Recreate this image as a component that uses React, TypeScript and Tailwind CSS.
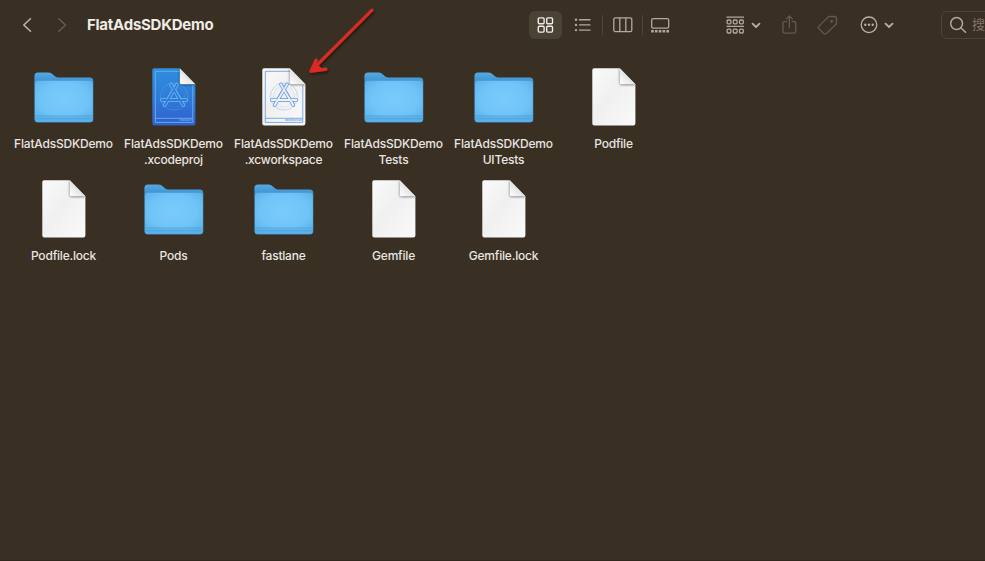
import React from "react";

type Kind = "folder" | "doc" | "project" | "workspace";

const files: { kind: Kind; lines: string[] }[] = [
  { kind: "folder", lines: ["FlatAdsSDKDemo"] },
  { kind: "project", lines: ["FlatAdsSDKDemo", ".xcodeproj"] },
  { kind: "workspace", lines: ["FlatAdsSDKDemo", ".xcworkspace"] },
  { kind: "folder", lines: ["FlatAdsSDKDemo", "Tests"] },
  { kind: "folder", lines: ["FlatAdsSDKDemo", "UITests"] },
  { kind: "doc", lines: ["Podfile"] },
  { kind: "doc", lines: ["Podfile.lock"] },
  { kind: "folder", lines: ["Pods"] },
  { kind: "folder", lines: ["fastlane"] },
  { kind: "doc", lines: ["Gemfile"] },
  { kind: "doc", lines: ["Gemfile.lock"] },
];

function Gradients() {
  return (
    <svg className="absolute h-0 w-0" aria-hidden="true">
      <defs>
        <linearGradient id="folderBack" x1="0" y1="0" x2="0" y2="1">
          <stop offset="0" stopColor="#52a9e4" />
          <stop offset="0.2" stopColor="#3f92cf" />
          <stop offset="1" stopColor="#3c8cc6" />
        </linearGradient>
        <radialGradient id="folderFront" cx="0.5" cy="0.45" r="0.68">
          <stop offset="0" stopColor="#79cbfb" />
          <stop offset="0.6" stopColor="#70c4f7" />
          <stop offset="1" stopColor="#5bb2ea" />
        </radialGradient>
        <linearGradient id="paper" x1="0" y1="0" x2="1" y2="1">
          <stop offset="0" stopColor="#fafafa" />
          <stop offset="0.45" stopColor="#f0f0f0" />
          <stop offset="1" stopColor="#fafafa" />
        </linearGradient>
        <linearGradient id="blueprint" x1="0" y1="0" x2="0" y2="1">
          <stop offset="0" stopColor="#2e8fdd" />
          <stop offset="0.5" stopColor="#2f7bd8" />
          <stop offset="1" stopColor="#315fce" />
        </linearGradient>
        <linearGradient id="fold" x1="0" y1="1" x2="0.6" y2="0.4">
          <stop offset="0" stopColor="#ffffff" />
          <stop offset="1" stopColor="#dedede" />
        </linearGradient>
        <filter id="soft" x="-50%" y="-50%" width="200%" height="200%">
          <feGaussianBlur stdDeviation="1.3" />
        </filter>
        <clipPath id="page">
          <path d="M13 3.3H38.8L54.4 19.2V58.6a2 2 0 0 1-2 2H13.3a2 2 0 0 1-2-2V5.1a1.8 1.8 0 0 1 1.7-1.8Z" />
        </clipPath>
      </defs>
    </svg>
  );
}

function FolderIcon() {
  return (
    <svg width="64" height="64" viewBox="0 0 64 64">
      <path
        d="M3.4 54V11Q3.4 7.4 7 7.4H17.2Q19.4 7.4 21 8.7L24.3 11.4Q25.5 12.4 27.5 12.4H58.6Q62.3 12.4 62.3 16V54Q62.3 57.6 58.6 57.6H7Q3.4 57.6 3.4 54Z"
        fill="url(#folderBack)"
      />
      <path
        d="M3.9 18.6Q3.9 15.7 7 15.7H58.8Q61.8 15.7 61.8 18.6V53.8Q61.8 57 58.6 57H7.1Q3.9 57 3.9 53.8Z"
        fill="url(#folderFront)"
      />
      <path d="M3.9 51.2H61.8V53.8Q61.8 57 58.6 57H7.1Q3.9 57 3.9 53.8Z" fill="#56afe7" opacity="0.7" />
      <path d="M4 50.8H61.7M4 53.8H61.7" stroke="#418fc7" strokeWidth="0.6" opacity="0.65" />
    </svg>
  );
}

function PageIcon({ kind }: { kind: Kind }) {
  const blue = kind === "project";
  const ink = blue ? "#6fbcf5" : "#5b98e3";
  return (
    <svg width="64" height="64" viewBox="0 0 64 64">
      <g clipPath="url(#page)">
        <rect x="11" y="3" width="44" height="58" fill={blue ? "url(#blueprint)" : "url(#paper)"} />
        {kind !== "doc" && (
          <g fill="none" stroke={ink} strokeWidth="0.8">
            <path d="M14.3 6.3H39M51.8 20V57.4H14.3V6.3M14.3 53.3H51.8" />
            <circle cx="33" cy="31.5" r="13.6" strokeWidth="0.6" opacity="0.5" />
            <circle cx="33" cy="31.5" r="10.6" strokeWidth="0.5" opacity="0.3" />
            <g strokeWidth="3.6" strokeLinecap="round">
              <path d="M36 19.4L23.6 40.2M30 19.4L42.4 40.2M20.8 35H45.4" />
            </g>
            <g stroke={blue ? "#2f7bd8" : "#eff2f6"} strokeWidth="2" strokeLinecap="round">
              <path d="M36 19.4L23.6 40.2M30 19.4L42.4 40.2M20.8 35H45.4" />
            </g>
            <path d="M34.6 20L25 36M31.4 20L41 36" strokeWidth="0.5" opacity="0.6" />
          </g>
        )}
        {kind !== "doc" && (
          <text
            x="51"
            y="56.4"
            textAnchor="end"
            fill={ink}
            className="font-[Inter,sans-serif] text-[2.7px] font-semibold"
          >
            {blue ? "PROJECT" : "WORKSPACE"}
          </text>
        )}
        <path d="M38.6 3V17.5Q38.6 20 41 20H55Z" fill="#000" opacity="0.5" filter="url(#soft)" />
      </g>
      <path d="M38.8 3.3V17.6Q38.8 19.2 40.4 19.2H54.4Z" fill="url(#fold)" />
    </svg>
  );
}

function ViewControls() {
  return (
    <div className="flex items-center">
      <div className="flex h-7 w-[33px] items-center justify-center rounded-md bg-[#4b4236]">
        <svg width="17" height="17" viewBox="0 0 17 17" fill="none" stroke="#f1eee9" strokeWidth="1.4">
          <rect x="1.3" y="0.9" width="5.8" height="5.8" rx="1" />
          <rect x="9.7" y="0.9" width="5.8" height="5.8" rx="1" />
          <rect x="1.3" y="9.3" width="5.8" height="5.8" rx="1" />
          <rect x="9.7" y="9.3" width="5.8" height="5.8" rx="1" />
        </svg>
      </div>
      <svg className="ml-3" width="17" height="16" viewBox="0 0 17 16" stroke="#b2aaa0" fill="#b2aaa0">
        <path d="M5 2.7H16.5M5 7.9H16.5M5 13.1H16.5" strokeWidth="1.4" />
        <g stroke="none">
          <circle cx="2" cy="2.7" r="1.2" />
          <circle cx="2" cy="7.9" r="1.2" />
          <circle cx="2" cy="13.1" r="1.2" />
        </g>
      </svg>
      <div className="ml-[11px] h-5 w-px bg-[#50473b]" />
      <svg className="ml-[10px]" width="20" height="16" viewBox="0 0 20 16" fill="none" stroke="#b2aaa0" strokeWidth="1.3">
        <rect x="0.8" y="0.8" width="18" height="13.8" rx="1.6" />
        <path d="M6.8 0.8V14.6M12.8 0.8V14.6" />
      </svg>
      <div className="ml-[9px] h-5 w-px bg-[#50473b]" />
      <svg className="ml-2" width="19" height="17" viewBox="0 0 19 17" fill="none" stroke="#b2aaa0">
        <rect x="0.7" y="1.6" width="17" height="9.6" rx="1.5" strokeWidth="1.3" />
        <path d="M0.2 14.2H18" strokeWidth="2.4" strokeDasharray="2.6 1.2" />
      </svg>
    </div>
  );
}

function Caret() {
  return (
    <svg width="10" height="7" viewBox="0 0 10 7" fill="none" stroke="#b8b0a6" strokeWidth="1.8" strokeLinecap="round" strokeLinejoin="round">
      <path d="M1.5 1.7L5 5L8.5 1.7" />
    </svg>
  );
}

function Toolbar() {
  return (
    <header className="flex h-[50px] items-center overflow-hidden">
      <div className="flex w-[87px] shrink-0 items-center">
        <svg className="ml-[22px]" width="11" height="16" viewBox="0 0 11 16" fill="none" stroke="#bdb6ad" strokeWidth="1.5" strokeLinecap="round" strokeLinejoin="round">
          <path d="M8.5 1.8L1.8 8L8.5 14.2" />
        </svg>
        <svg className="ml-6" width="11" height="16" viewBox="0 0 11 16" fill="none" stroke="#655c50" strokeWidth="1.5" strokeLinecap="round" strokeLinejoin="round">
          <path d="M1.8 1.8L8.5 8L1.8 14.2" />
        </svg>
      </div>
      <h1 className="w-[442px] shrink-0 text-[15px] font-bold tracking-[-0.25px] text-[#efece8]">FlatAdsSDKDemo</h1>
      <ViewControls />
      <div className="ml-[56px] flex shrink-0 items-center gap-[7px]">
        <svg width="18" height="19" viewBox="0 0 18 19" fill="none" stroke="#b2aaa0" strokeWidth="1.3">
          <path d="M0.5 1.2H18M0.5 10.3H18" />
          <g>
            <rect x="1.1" y="4" width="3.8" height="3.8" rx="1" />
            <rect x="7.3" y="4" width="3.8" height="3.8" rx="1" />
            <rect x="13.5" y="4" width="3.8" height="3.8" rx="1" />
            <rect x="1.1" y="13.2" width="3.8" height="3.8" rx="1" />
            <rect x="7.3" y="13.2" width="3.8" height="3.8" rx="1" />
            <rect x="13.5" y="13.2" width="3.8" height="3.8" rx="1" />
          </g>
        </svg>
        <Caret />
      </div>
      <svg className="ml-[21px] shrink-0" width="15" height="21" viewBox="0 0 15 21" fill="none" stroke="#645a4e" strokeWidth="1.3" strokeLinecap="round" strokeLinejoin="round">
        <path d="M4.5 6.7H2.5Q1 6.7 1 8.2V16.6Q1 18.1 2.5 18.1H12.2Q13.7 18.1 13.7 16.6V8.2Q13.7 6.7 12.2 6.7H10.2M7.35 12.2V1.4M4.4 3.9L7.35 0.9L10.3 3.9" />
      </svg>
      <svg className="ml-5 shrink-0" width="21" height="21" viewBox="0 0 21 21" fill="none" stroke="#645a4e" strokeWidth="1.3" strokeLinejoin="round">
        <path d="M11.2 2.1Q11.9 1.5 12.8 1.5H17.2Q19.5 1.5 19.5 3.8V7.8Q19.5 8.8 18.8 9.5L9.3 18.6Q8 19.7 6.8 18.6L1.8 13.5Q0.7 12.3 1.9 11.1Z" />
        <circle cx="14.6" cy="6.4" r="0.8" />
      </svg>
      <div className="ml-[22px] flex shrink-0 items-center gap-1.5">
        <svg width="18" height="18" viewBox="0 0 18 18" fill="none" stroke="#b8b0a6">
          <circle cx="9" cy="8.8" r="7.8" strokeWidth="1.3" />
          <g fill="#b8b0a6" stroke="none">
            <circle cx="5.3" cy="8.8" r="1.2" />
            <circle cx="9" cy="8.8" r="1.2" />
            <circle cx="12.7" cy="8.8" r="1.2" />
          </g>
        </svg>
        <Caret />
      </div>
      <div className="ml-[47px] flex h-7 w-[180px] shrink-0 items-center rounded-md border border-[#4d4438] pl-[7px] text-[13px] text-[#7d7468]">
        <svg width="19" height="18" viewBox="0 0 19 18" fill="none" stroke="#b2aaa0" strokeWidth="1.5" strokeLinecap="round">
          <circle cx="7.6" cy="7.5" r="5.9" />
          <path d="M12 12L16.6 16.3" />
        </svg>
        <span className="ml-1 whitespace-nowrap">搜索</span>
      </div>
    </header>
  );
}

function RedArrow() {
  return (
    <svg
      className="pointer-events-none absolute left-[300px] top-0 drop-shadow-[1px_2px_1px_rgba(0,0,0,0.4)]"
      width="84"
      height="84"
      viewBox="0 0 84 84"
      fill="none"
      stroke="#d92b25"
      strokeWidth="3.2"
      strokeLinecap="round"
      strokeLinejoin="round"
    >
      <path d="M72 10.2L12 70" />
      <path d="M16.2 60.2L11 71.3L25.8 69.2" strokeWidth="3.4" />
      <path d="M15.5 63L12 70.5L22 69L18.5 65.5Z" fill="#d92b25" strokeWidth="1" />
    </svg>
  );
}

export default function App() {
  return (
    <div className="relative h-[561px] w-[985px] overflow-hidden border-b border-[#30271d] bg-[#392f22] font-[Inter,'Noto_Sans_CJK_SC',sans-serif]">
      <Gradients />
      <Toolbar />
      <main className="grid w-[668px] grid-cols-[repeat(6,110px)] auto-rows-[112px] pl-2 pt-[15px]">
        {files.map((file) => (
          <div key={file.lines.join("")} className="flex flex-col items-center">
            {file.kind === "folder" ? <FolderIcon /> : <PageIcon kind={file.kind} />}
            <div className="mt-[7px] pl-px text-center text-[12px] leading-4 font-medium tracking-[-0.2px] text-[#e9e6e1]">
              {file.lines.map((line) => (
                <div key={line} className="whitespace-nowrap">{line}</div>
              ))}
            </div>
          </div>
        ))}
      </main>
      <RedArrow />
    </div>
  );
}
